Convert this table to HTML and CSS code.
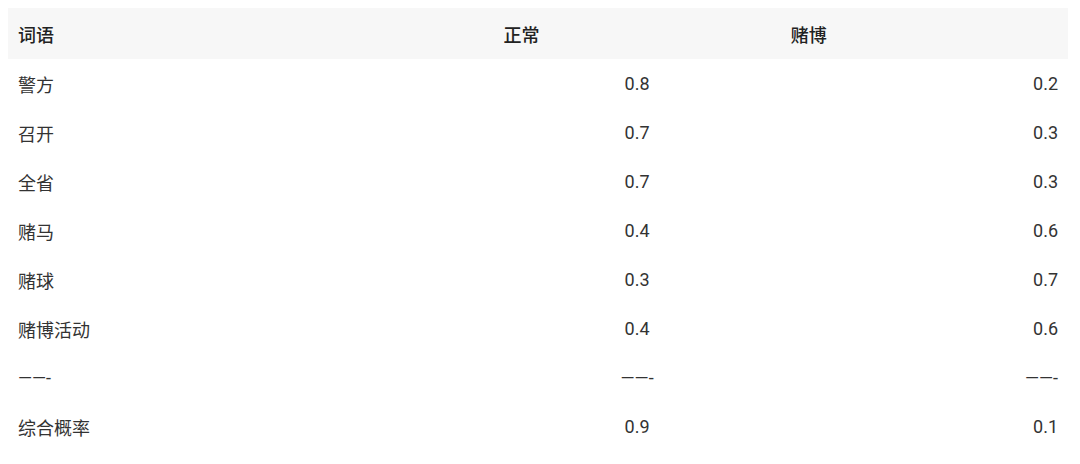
FILE: index.html
```html
<!DOCTYPE html>
<html lang="zh">
<head>
<meta charset="utf-8">
<link rel="stylesheet" href="styles.css">
</head>
<body>
<table class="prob-table">
  <colgroup>
    <col class="col-word">
    <col class="col-num">
    <col class="col-num">
  </colgroup>
  <thead>
    <tr><th>词语</th><th>正常</th><th>赌博</th></tr>
  </thead>
  <tbody>
    <tr><td>警方</td><td class="mid">0.8</td><td class="end">0.2</td></tr>
    <tr><td>召开</td><td class="mid">0.7</td><td class="end">0.3</td></tr>
    <tr><td>全省</td><td class="mid">0.7</td><td class="end">0.3</td></tr>
    <tr><td>赌马</td><td class="mid">0.4</td><td class="end">0.6</td></tr>
    <tr><td>赌球</td><td class="mid">0.3</td><td class="end">0.7</td></tr>
    <tr><td>赌博活动</td><td class="mid">0.4</td><td class="end">0.6</td></tr>
    <tr><td>——-</td><td class="mid">——-</td><td class="end">——-</td></tr>
    <tr><td>综合概率</td><td class="mid">0.9</td><td class="end">0.1</td></tr>
  </tbody>
</table>
</body>
</html>
```

FILE: styles.css
```css
html, body {
  margin: 0;
  padding: 0;
  background: #ffffff;
}

body {
  padding: 8px 12px 0 8px;
  font-family: "Roboto", "Noto Sans CJK SC", sans-serif;
  font-size: 18px;
  color: #333333;
}

.prob-table {
  width: 1060px;
  border-collapse: collapse;
  table-layout: fixed;
}

.col-word { width: 485px; }
.col-num { width: 287px; }

.prob-table th {
  background: #f7f7f7;
  height: 51px;
  padding: 0 10px;
  text-align: left;
  font-weight: 500;
  color: #222222;
}

.prob-table td {
  height: 49px;
  padding: 0 10px;
  text-align: left;
}

.prob-table td.mid { text-align: center; }
.prob-table td.end { text-align: right; }
```
